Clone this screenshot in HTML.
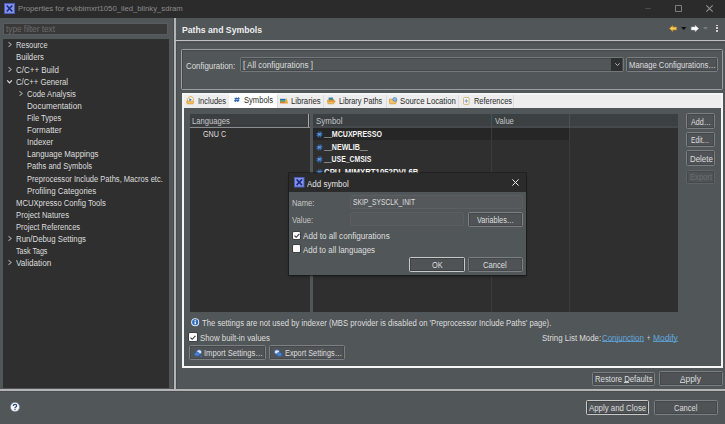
<!DOCTYPE html>
<html><head><meta charset="utf-8">
<style>
*{margin:0;padding:0;box-sizing:border-box}
html,body{width:725px;height:424px;overflow:hidden;background:#515658;font-family:"Liberation Sans",sans-serif;color:#dedede;position:relative}
.a{position:absolute}
.t{position:absolute;white-space:pre;line-height:10px;transform-origin:0 50%}
svg{position:absolute;overflow:visible}
</style></head><body>
<div class="a" style="left:0px;top:0px;width:725px;height:17.5px;background:#2b2b2b;"></div>
<svg style="left:4px;top:3.2px" width="11" height="11" viewBox="0 0 11 11"><rect x="0.5" y="0.5" width="10" height="10" fill="#8494e2" stroke="#4a5cc0" stroke-width="1"/><path d="M2.7 2.5L8.3 8.5M8.3 2.5L2.7 8.5" stroke="#1a2a88" stroke-width="1.6"/></svg>
<div class="t" style="left:17.80px;top:4.09px;font-size:8.0px;transform:scaleX(0.9652);color:#8c8c8c;">Properties for evkbimxrt1050_iled_blinky_sdram</div>
<div class="a" style="left:645px;top:7.9px;width:6.4px;height:0.9px;background:#4a4a4a;"></div>
<div class="a" style="left:675.1px;top:5px;width:7.100000000000023px;height:7px;border:1px solid #7c7c7c;border-radius:0.8px;"></div>
<svg style="left:706.4px;top:5.1px" width="7" height="7" viewBox="0 0 7 7"><path d="M0.3 0.3L6.7 6.7M6.7 0.3L0.3 6.7" stroke="#909090" stroke-width="1.1"/></svg>
<div class="a" style="left:3.2px;top:22.6px;width:164.8px;height:12.5px;background:#393939;border:1px solid #585c5e;"></div>
<div class="t" style="left:5.90px;top:23.80px;font-size:8.5px;transform:scaleX(0.9691);color:#6c6c6c;">type filter text</div>
<div class="a" style="left:3px;top:38.6px;width:166px;height:349.8px;background:#2f2f2f;"></div>
<svg style="left:8.3px;top:42.4px" width="4" height="5" viewBox="0 0 4 5"><path d="M0.5 0.2L3.2 2.5L0.5 4.8" fill="none" stroke="#9c9c9c" stroke-width="1.05"/></svg>
<div class="t" style="left:16.40px;top:40.30px;font-size:8.5px;transform:scaleX(0.8656);color:#dedede;">Resource</div>
<div class="t" style="left:16.40px;top:52.41px;font-size:8.5px;transform:scaleX(0.9082);color:#dedede;">Builders</div>
<svg style="left:8.3px;top:66.62px" width="4" height="5" viewBox="0 0 4 5"><path d="M0.5 0.2L3.2 2.5L0.5 4.8" fill="none" stroke="#9c9c9c" stroke-width="1.05"/></svg>
<div class="t" style="left:16.40px;top:64.52px;font-size:8.5px;transform:scaleX(0.9380);color:#dedede;">C/C++ Build</div>
<svg style="left:7.3px;top:79.63px" width="5" height="3.5" viewBox="0 0 5 3.5"><path d="M0.2 0.4L2.5 2.9L4.8 0.4" fill="none" stroke="#dcdcdc" stroke-width="1.2"/></svg>
<div class="t" style="left:16.40px;top:76.63px;font-size:8.5px;transform:scaleX(0.9095);color:#dedede;">C/C++ General</div>
<svg style="left:18.9px;top:90.84px" width="4" height="5" viewBox="0 0 4 5"><path d="M0.5 0.2L3.2 2.5L0.5 4.8" fill="none" stroke="#9c9c9c" stroke-width="1.05"/></svg>
<div class="t" style="left:26.60px;top:88.74px;font-size:8.5px;transform:scaleX(0.9058);color:#dedede;">Code Analysis</div>
<div class="t" style="left:26.60px;top:100.85px;font-size:8.5px;transform:scaleX(0.9568);color:#dedede;">Documentation</div>
<div class="t" style="left:26.60px;top:112.96px;font-size:8.5px;transform:scaleX(0.8862);color:#dedede;">File Types</div>
<div class="t" style="left:26.60px;top:125.07px;font-size:8.5px;transform:scaleX(0.9418);color:#dedede;">Formatter</div>
<div class="t" style="left:26.60px;top:137.18px;font-size:8.5px;transform:scaleX(0.9239);color:#dedede;">Indexer</div>
<div class="t" style="left:26.60px;top:149.29px;font-size:8.5px;transform:scaleX(0.9280);color:#dedede;">Language Mappings</div>
<div class="t" style="left:26.60px;top:161.40px;font-size:8.5px;transform:scaleX(0.8889);color:#dedede;">Paths and Symbols</div>
<div class="t" style="left:26.60px;top:173.51px;font-size:8.5px;transform:scaleX(0.8871);color:#dedede;">Preprocessor Include Paths, Macros etc.</div>
<div class="t" style="left:26.60px;top:185.62px;font-size:8.5px;transform:scaleX(0.9328);color:#dedede;">Profiling Categories</div>
<div class="t" style="left:16.40px;top:197.73px;font-size:8.5px;transform:scaleX(0.9032);color:#dedede;">MCUXpresso Config Tools</div>
<div class="t" style="left:16.40px;top:209.84px;font-size:8.5px;transform:scaleX(0.9045);color:#dedede;">Project Natures</div>
<div class="t" style="left:16.40px;top:221.95px;font-size:8.5px;transform:scaleX(0.8866);color:#dedede;">Project References</div>
<svg style="left:8.3px;top:236.16px" width="4" height="5" viewBox="0 0 4 5"><path d="M0.5 0.2L3.2 2.5L0.5 4.8" fill="none" stroke="#9c9c9c" stroke-width="1.05"/></svg>
<div class="t" style="left:16.40px;top:234.06px;font-size:8.5px;transform:scaleX(0.9188);color:#dedede;">Run/Debug Settings</div>
<div class="t" style="left:16.40px;top:246.17px;font-size:8.5px;transform:scaleX(0.8342);color:#dedede;">Task Tags</div>
<svg style="left:8.3px;top:260.38px" width="4" height="5" viewBox="0 0 4 5"><path d="M0.5 0.2L3.2 2.5L0.5 4.8" fill="none" stroke="#9c9c9c" stroke-width="1.05"/></svg>
<div class="t" style="left:16.40px;top:258.28px;font-size:8.5px;transform:scaleX(0.9590);color:#dedede;">Validation</div>
<div class="a" style="left:173px;top:18px;width:1px;height:371.5px;background:#474b4d;"></div>
<div class="a" style="left:176px;top:41px;width:1px;height:348.5px;background:#474b4d;"></div>
<div class="a" style="left:174px;top:18px;width:1.5px;height:371.5px;background:#b4b4b4;"></div>
<div class="a" style="left:0px;top:389.1px;width:725px;height:1.5px;background:#b4b4b4;"></div>
<div class="a" style="left:0px;top:390.6px;width:725px;height:1px;background:#484c4e;"></div>
<div class="t" style="left:181.50px;top:24.81px;font-size:9.4px;transform:scaleX(0.9250);color:#eeeeee;font-weight:bold;">Paths and Symbols</div>
<div class="a" style="left:175px;top:40.3px;width:550px;height:1.2px;background:#c0c0c0;"></div>
<div class="a" style="left:176px;top:41.5px;width:549px;height:1px;background:#474b4d;"></div>
<svg style="left:669px;top:24.5px" width="8" height="7" viewBox="0 0 8 7"><path d="M0.4 3.5L3.8 0.4V2.1H7.6V4.9H3.8V6.6Z" fill="#f4c85a" stroke="#b8801e" stroke-width="0.6"/></svg>
<svg style="left:681px;top:27px" width="5.5" height="3" viewBox="0 0 5.5 3"><path d="M0 0H5.5L2.75 3Z" fill="#101010"/></svg>
<svg style="left:691px;top:24.5px" width="8" height="7" viewBox="0 0 8 7"><path d="M7.6 3.5L4.2 0.4V2.1H0.4V4.9H4.2V6.6Z" fill="#ffffff" stroke="#d0d0d0" stroke-width="0.6"/></svg>
<svg style="left:703.3px;top:27px" width="5" height="2.8" viewBox="0 0 5 2.8"><path d="M0 0H5L2.5 2.8Z" fill="#7a7e80"/></svg>
<div class="a" style="left:715.6px;top:24.6px;width:2px;height:1.8px;background:#e8e8e8;border-radius:0.8px;"></div>
<div class="a" style="left:715.6px;top:27.3px;width:2px;height:1.8px;background:#e8e8e8;border-radius:0.8px;"></div>
<div class="a" style="left:715.6px;top:30.0px;width:2px;height:1.8px;background:#e8e8e8;border-radius:0.8px;"></div>
<div class="a" style="left:181px;top:49px;width:542px;height:41px;border:1px solid #9a9ea0;border-radius:1.5px;box-shadow:inset 1px 1px 0 #45494b;"></div>
<div class="t" style="left:186.00px;top:60.50px;font-size:8.5px;transform:scaleX(0.9297);color:#dedede;">Configuration:</div>
<div class="a" style="left:240px;top:56.7px;width:383.79999999999995px;height:15.0px;border:1px solid #74787a;border-radius:1.5px;box-shadow:inset 0 0 0 1px #45494b;"></div>
<div class="t" style="left:243.00px;top:60.00px;font-size:8.5px;transform:scaleX(0.9496);color:#dedede;">[ All configurations ]</div>
<div class="a" style="left:611.3px;top:58px;width:11px;height:12.6px;background:#2e2f30;"></div>
<svg style="left:614.6px;top:63px" width="5" height="3" viewBox="0 0 5 3"><path d="M0.3 0.3L2.5 2.5L4.7 0.3" fill="none" stroke="#d8d8d8" stroke-width="0.8"/></svg>
<div class="a" style="left:626.2px;top:57.1px;width:92.19999999999993px;height:15.199999999999996px;border:1px solid #7b7f81;border-radius:1.5px;box-shadow:inset 1px 1px 0 #45494b,inset -1px -1px 0 #45494b;background:#4f5356;"></div>
<div class="t" style="left:629.00px;top:60.20px;font-size:8.5px;transform:scaleX(0.9026);color:#dedede;">Manage Configurations…</div>
<div class="a" style="left:181.5px;top:92.8px;width:541px;height:275px;background:#f5f5f5;"></div>
<div class="a" style="left:183.5px;top:107.5px;width:537.2px;height:258px;background:#515658;"></div>
<div class="a" style="left:183.5px;top:94.5px;width:537.2px;height:13px;background:#ededed;"></div>
<div class="t" style="left:197.50px;top:95.90px;font-size:8.5px;transform:scaleX(0.8872);color:#2a2a2a;">Includes</div>
<div class="a" style="left:228.5px;top:93px;width:48.5px;height:14.7px;background:#ffffff;"></div>
<div class="t" style="left:243.90px;top:95.00px;font-size:8.5px;transform:scaleX(0.8928);color:#2a2a2a;">Symbols</div>
<div class="a" style="left:277px;top:94.5px;width:0.8px;height:13px;background:#dcdcdc;"></div>
<div class="t" style="left:291.10px;top:95.90px;font-size:8.5px;transform:scaleX(0.9077);color:#2a2a2a;">Libraries</div>
<div class="a" style="left:323px;top:94.5px;width:0.8px;height:13px;background:#dcdcdc;"></div>
<div class="t" style="left:338.70px;top:95.90px;font-size:8.5px;transform:scaleX(0.8644);color:#2a2a2a;">Library Paths</div>
<div class="a" style="left:385.8px;top:94.5px;width:0.8px;height:13px;background:#dcdcdc;"></div>
<div class="t" style="left:400.10px;top:95.90px;font-size:8.5px;transform:scaleX(0.9082);color:#2a2a2a;">Source Location</div>
<div class="a" style="left:458.2px;top:94.5px;width:0.8px;height:13px;background:#dcdcdc;"></div>
<div class="t" style="left:473.90px;top:95.90px;font-size:8.5px;transform:scaleX(0.8742);color:#2a2a2a;">References</div>
<div class="a" style="left:513.2px;top:94.5px;width:0.8px;height:13px;background:#dcdcdc;"></div>
<svg style="left:186.1px;top:95.9px" width="8.2" height="8.4" viewBox="0 0 8.2 8.4"><path d="M1.6 5.6Q1 3.2 2.6 1.6Q3.6 0.6 5 0.7Q6.8 0.9 7.3 2.6Q7.6 3.8 7 4.8" fill="#fbfbfb" stroke="#e0a838" stroke-width="1"/><path d="M3.4 2.2L5.9 3.7L3.4 5.2Z" fill="#3a6aa8"/><path d="M0.6 5.2H7.8L7 7.9H1.2Z" fill="#f2c260" stroke="#d09028" stroke-width="0.6"/></svg>
<svg style="left:233.6px;top:97.4px" width="5.8" height="5.3" viewBox="0 0 5.8 5.3"><path d="M2.3 0.3L1.3 5M4.6 0.3L3.6 5M0.6 1.7H5.6M0.2 3.6H5.2" stroke="#3068b0" stroke-width="1.2"/></svg>
<svg style="left:279.9px;top:97px" width="8.2" height="7" viewBox="0 0 8.2 7"><rect x="0" y="1.8" width="5.6" height="1.4" fill="#2b6cc0"/><rect x="0" y="3.2" width="5.6" height="1.6" fill="#3a9a50"/><rect x="0" y="4.8" width="5.6" height="1.6" fill="#e07a30"/><path d="M5.2 6.6L6.6 0.4L8.1 6.6Z" fill="#f0a820"/></svg>
<svg style="left:327.1px;top:97.3px" width="8.4" height="7" viewBox="0 0 8.4 7"><rect x="1.6" y="0.6" width="4.4" height="1.3" fill="#2b6cc0"/><rect x="1.6" y="1.9" width="5" height="1.6" fill="#3a9a50"/><path d="M0.4 3.2H6.4L8.2 4L6.6 6.8H1Z" fill="#f2c060" stroke="#c88a20" stroke-width="0.6"/><path d="M1.4 4.2H7.4" stroke="#e06a30" stroke-width="0.8"/></svg>
<svg style="left:388.9px;top:96.9px" width="8.2" height="7.2" viewBox="0 0 8.2 7.2"><path d="M0.4 2.2H3.6L7.8 3.6L6.6 6.8H0.8Z" fill="#f2c466" stroke="#c88a20" stroke-width="0.6"/><circle cx="5.8" cy="2.4" r="2" fill="#8ab4ec" stroke="#3a6ab0" stroke-width="0.5"/></svg>
<svg style="left:463.4px;top:96.7px" width="6.6" height="7.9" viewBox="0 0 6.6 7.9"><rect x="0.5" y="0.5" width="5.6" height="6.9" rx="1" fill="#f6f6f6" stroke="#c8a860" stroke-width="0.8"/><path d="M3.3 2.2V5.8M1.6 4H5" stroke="#8898b8" stroke-width="1"/></svg>
<div class="a" style="left:189.5px;top:113.7px;width:120.1px;height:198.2px;background:#2f2f2f;"></div>
<div class="a" style="left:189.5px;top:113.7px;width:120.1px;height:13.2px;background:#3b3f42;"></div>
<div class="a" style="left:189.5px;top:125.2px;width:120.1px;height:1.2px;background:#35393b;"></div>
<div class="a" style="left:189.5px;top:126.8px;width:120.1px;height:1.1px;background:#8a8d8f;"></div>
<div class="a" style="left:307.8px;top:113.7px;width:1.2px;height:13.2px;background:#a8a8a8;"></div>
<div class="t" style="left:192.00px;top:115.90px;font-size:8.5px;transform:scaleX(0.8960);color:#c4c6c8;">Languages</div>
<div class="t" style="left:202.80px;top:129.10px;font-size:8.5px;transform:scaleX(0.8470);color:#dedede;">GNU C</div>
<div class="a" style="left:313px;top:113.7px;width:364.5px;height:198.2px;background:#2f2f2f;"></div>
<div class="a" style="left:313px;top:113.7px;width:364.5px;height:14.3px;background:#3b4043;"></div>
<div class="a" style="left:313px;top:126.3px;width:364.5px;height:1.7px;background:#45494c;"></div>
<div class="a" style="left:491px;top:128px;width:1px;height:183.9px;background:#383c3f;"></div>
<div class="a" style="left:569px;top:128px;width:1px;height:183.9px;background:#383c3f;"></div>
<div class="a" style="left:491px;top:113.7px;width:1px;height:14.3px;background:#4c5154;"></div>
<div class="a" style="left:569px;top:113.7px;width:1px;height:14.3px;background:#4c5154;"></div>
<div class="a" style="left:313px;top:128px;width:178px;height:12.3px;background:#262626;"></div>
<div class="a" style="left:492px;top:128px;width:76.5px;height:12.3px;background:#262626;"></div>
<div class="t" style="left:315.70px;top:115.90px;font-size:8.5px;transform:scaleX(0.9350);color:#c4c6c8;">Symbol</div>
<div class="t" style="left:495.00px;top:115.90px;font-size:8.5px;transform:scaleX(0.8906);color:#c4c6c8;">Value</div>
<svg style="left:315.9px;top:131.0px" width="6.6" height="6.8" viewBox="0 0 6.6 6.8"><path d="M2.9 0.9L2.2 5.9M4.9 0.9L4.2 5.9M1 2.6H6M0.8 4.3H5.8" stroke="#3a72bc" stroke-width="1.15" stroke-linecap="round"/><path d="M2.2 2.6L4.8 2.6L4.5 4.3L2 4.3Z" fill="#6a9ad4"/></svg>
<div class="t" style="left:324.30px;top:129.10px;font-size:8.8px;transform:scaleX(0.8016);color:#f4f4f4;font-weight:bold;">__MCUXPRESSO</div>
<svg style="left:315.9px;top:143.6px" width="6.6" height="6.8" viewBox="0 0 6.6 6.8"><path d="M2.9 0.9L2.2 5.9M4.9 0.9L4.2 5.9M1 2.6H6M0.8 4.3H5.8" stroke="#3a72bc" stroke-width="1.15" stroke-linecap="round"/><path d="M2.2 2.6L4.8 2.6L4.5 4.3L2 4.3Z" fill="#6a9ad4"/></svg>
<div class="t" style="left:324.30px;top:141.70px;font-size:8.8px;transform:scaleX(0.8035);color:#f4f4f4;font-weight:bold;">__NEWLIB__</div>
<svg style="left:315.9px;top:156.2px" width="6.6" height="6.8" viewBox="0 0 6.6 6.8"><path d="M2.9 0.9L2.2 5.9M4.9 0.9L4.2 5.9M1 2.6H6M0.8 4.3H5.8" stroke="#3a72bc" stroke-width="1.15" stroke-linecap="round"/><path d="M2.2 2.6L4.8 2.6L4.5 4.3L2 4.3Z" fill="#6a9ad4"/></svg>
<div class="t" style="left:324.30px;top:154.30px;font-size:8.8px;transform:scaleX(0.7786);color:#f4f4f4;font-weight:bold;">__USE_CMSIS</div>
<svg style="left:315.9px;top:168.8px" width="6.6" height="6.8" viewBox="0 0 6.6 6.8"><path d="M2.9 0.9L2.2 5.9M4.9 0.9L4.2 5.9M1 2.6H6M0.8 4.3H5.8" stroke="#3a72bc" stroke-width="1.15" stroke-linecap="round"/><path d="M2.2 2.6L4.8 2.6L4.5 4.3L2 4.3Z" fill="#6a9ad4"/></svg>
<div class="t" style="left:324.30px;top:166.90px;font-size:8.8px;transform:scaleX(0.8867);color:#f4f4f4;font-weight:bold;">CPU_MIMXRT1052DVL6B</div>
<div class="a" style="left:685.9px;top:113.1px;width:29.300000000000068px;height:15.800000000000011px;border:1px solid #7b7f81;border-radius:1.5px;box-shadow:inset 1px 1px 0 #45494b,inset -1px -1px 0 #45494b;background:#4f5356;"></div>
<div class="t" style="left:690.80px;top:116.70px;font-size:8.5px;transform:scaleX(0.8423);color:#dedede;">Add…</div>
<div class="a" style="left:685.9px;top:131.9px;width:29.300000000000068px;height:14.900000000000006px;border:1px solid #7b7f81;border-radius:1.5px;box-shadow:inset 1px 1px 0 #45494b,inset -1px -1px 0 #45494b;background:#4f5356;"></div>
<div class="t" style="left:691.40px;top:134.90px;font-size:8.5px;transform:scaleX(0.7903);color:#dedede;">Edit…</div>
<div class="a" style="left:685.9px;top:150.4px;width:29.300000000000068px;height:15.400000000000006px;border:1px solid #7b7f81;border-radius:1.5px;box-shadow:inset 1px 1px 0 #45494b,inset -1px -1px 0 #45494b;background:#4f5356;"></div>
<div class="t" style="left:689.50px;top:153.60px;font-size:8.5px;transform:scaleX(0.9277);color:#dedede;">Delete</div>
<div class="a" style="left:685.9px;top:169.5px;width:29.300000000000068px;height:14.699999999999989px;border:1px solid #5f6365;border-radius:1.5px;box-shadow:inset 1px 1px 0 #45494b,inset -1px -1px 0 #45494b;background:#4f5356;"></div>
<div class="t" style="left:690.00px;top:172.20px;font-size:8.5px;transform:scaleX(0.8951);color:#6a6e70;">Export</div>
<svg style="left:190.6px;top:318.4px" width="8.4" height="8.4" viewBox="0 0 8.4 8.4"><circle cx="4.2" cy="4.2" r="4" fill="#f0f4fa"/><circle cx="4.2" cy="4.2" r="3.1" fill="#2f6cc0"/><rect x="3.55" y="3.5" width="1.3" height="2.8" fill="#fff"/><rect x="3.55" y="1.8" width="1.3" height="1.1" fill="#fff"/></svg>
<div class="t" style="left:201.90px;top:318.00px;font-size:8.5px;transform:scaleX(0.9072);color:#dedede;">The settings are not used by indexer (MBS provider is disabled on 'Preprocessor Include Paths' page).</div>
<div class="a" style="left:189.3px;top:333.2px;width:7.8px;height:7.9px;background:#fafafa;box-shadow:0 0 0 0.6px #2e2e2e;border-radius:0.8px;"></div>
<svg style="left:190.4px;top:334.5px" width="5.5" height="5.5" viewBox="0 0 5.5 5.5"><path d="M0.5 2.6L2.2 4.3L5.4 0.9" fill="none" stroke="#383838" stroke-width="1.1"/></svg>
<div class="t" style="left:199.50px;top:332.70px;font-size:8.5px;transform:scaleX(0.9245);color:#dedede;">Show built-in values</div>
<div class="t" style="left:541.60px;top:332.70px;font-size:8.5px;transform:scaleX(0.9282);color:#dedede;">String List Mode:</div>
<div class="t" style="left:602.20px;top:332.70px;font-size:8.5px;transform:scaleX(0.9312);color:#62a8de;">Conjunction</div>
<div class="a" style="left:602.2px;top:340.7px;width:41.8px;height:0.9px;background:#5a98cc;"></div>
<div class="t" style="left:646.70px;top:332.70px;font-size:8.5px;transform:scaleX(0.6642);color:#dedede;">+</div>
<div class="t" style="left:653.40px;top:332.70px;font-size:8.5px;transform:scaleX(0.9901);color:#62a8de;">Modify</div>
<div class="a" style="left:653.4px;top:340.7px;width:24.8px;height:0.9px;background:#5a98cc;"></div>
<div class="a" style="left:189.2px;top:345.3px;width:76.69999999999999px;height:14.800000000000011px;border:1px solid #7b7f81;border-radius:1.5px;box-shadow:inset 1px 1px 0 #45494b,inset -1px -1px 0 #45494b;background:#4f5356;"></div>
<div class="t" style="left:204.20px;top:348.40px;font-size:8.5px;transform:scaleX(0.8969);color:#dedede;">Import Settings…</div>
<div class="a" style="left:269.4px;top:345.3px;width:75.5px;height:14.800000000000011px;border:1px solid #7b7f81;border-radius:1.5px;box-shadow:inset 1px 1px 0 #45494b,inset -1px -1px 0 #45494b;background:#4f5356;"></div>
<div class="t" style="left:284.60px;top:348.40px;font-size:8.5px;transform:scaleX(0.8618);color:#dedede;">Export Settings…</div>
<svg style="left:193.9px;top:348.6px" width="8.2" height="8.2" viewBox="0 0 8.2 8.2"><ellipse cx="5.2" cy="3" rx="2.6" ry="2.2" fill="#dce8f8" stroke="#3a6ab8" stroke-width="0.8"/><ellipse cx="3" cy="5.2" rx="2.6" ry="2" fill="#4a80d0" stroke="#2a5aa8" stroke-width="0.6"/><circle cx="7.2" cy="7.2" r="0.9" fill="#2a70d0"/></svg>
<svg style="left:273.6px;top:348.6px" width="8.6" height="8.2" viewBox="0 0 8.6 8.2"><ellipse cx="3" cy="3" rx="2.6" ry="2.2" fill="#dce8f8" stroke="#3a6ab8" stroke-width="0.8"/><ellipse cx="5.4" cy="5.4" rx="2.6" ry="2" fill="#4a80d0" stroke="#2a5aa8" stroke-width="0.6"/></svg>
<div class="a" style="left:592.3px;top:371.5px;width:63.200000000000045px;height:14.300000000000011px;border:1px solid #7b7f81;border-radius:1.5px;box-shadow:inset 1px 1px 0 #45494b,inset -1px -1px 0 #45494b;background:#4f5356;"></div>
<div class="t" style="left:595.00px;top:374.20px;font-size:8.5px;transform:scaleX(0.9098);color:#dedede;">Restore Defaults</div>
<div class="a" style="left:623.8px;top:382.3px;width:5px;height:0.8px;background:#c8c8c8;"></div>
<div class="a" style="left:659.3px;top:371.3px;width:63.90000000000009px;height:14.599999999999966px;border:1px solid #7b7f81;border-radius:1.5px;box-shadow:inset 1px 1px 0 #45494b,inset -1px -1px 0 #45494b;background:#4f5356;"></div>
<div class="t" style="left:680.00px;top:374.20px;font-size:8.5px;transform:scaleX(0.9828);color:#dedede;">Apply</div>
<div class="a" style="left:680.2px;top:382.3px;width:5px;height:0.8px;background:#c8c8c8;"></div>
<svg style="left:9.5px;top:401.8px" width="10" height="10" viewBox="0 0 10 10"><circle cx="5" cy="5" r="4.7" fill="#f6f6f6" stroke="#5a6a88" stroke-width="0.6"/><path d="M3.3 3.9Q3.3 2.3 5 2.3Q6.7 2.3 6.7 3.8Q6.7 4.7 5.5 5.2Q5 5.5 5 6.2" fill="none" stroke="#2a4a80" stroke-width="1.2"/><rect x="4.4" y="6.9" width="1.2" height="1.2" fill="#2a4a80"/></svg>
<div class="a" style="left:586px;top:400.1px;width:63.10000000000002px;height:14.899999999999977px;border:1.2px solid #c8c8c8;border-radius:1.5px;box-shadow:inset 0 0 0 1px #3e4244;background:#4f5356;"></div>
<div class="t" style="left:589.20px;top:403.40px;font-size:8.5px;transform:scaleX(0.9240);color:#dedede;">Apply and Close</div>
<div class="a" style="left:654.1px;top:399.9px;width:64.10000000000002px;height:15.0px;border:1px solid #7b7f81;border-radius:1.5px;box-shadow:inset 1px 1px 0 #45494b,inset -1px -1px 0 #45494b;background:#4f5356;"></div>
<div class="t" style="left:674.20px;top:403.40px;font-size:8.5px;transform:scaleX(0.8841);color:#dedede;">Cancel</div>
<div class="a" style="left:289px;top:172.8px;width:236.5px;height:102.3px;background:#515658;box-shadow:0 0 0 0.8px rgba(20,20,20,0.6),0 1.5px 3px rgba(0,0,0,0.35);"></div>
<div class="a" style="left:289px;top:172.8px;width:237px;height:19px;background:#2b2b2b;"></div>
<svg style="left:294.3px;top:177.4px" width="10.5" height="10.5" viewBox="0 0 11 11"><rect x="0.5" y="0.5" width="10" height="10" fill="#8494e2" stroke="#4a5cc0" stroke-width="1"/><path d="M2.7 2.5L8.3 8.5M8.3 2.5L2.7 8.5" stroke="#1a2a88" stroke-width="1.6"/></svg>
<div class="t" style="left:307.30px;top:179.00px;font-size:8.5px;transform:scaleX(0.9387);color:#e4e4e4;">Add symbol</div>
<svg style="left:511.5px;top:179.3px" width="7" height="7" viewBox="0 0 7 7"><path d="M0.4 0.4L6.6 6.6M6.6 0.4L0.4 6.6" stroke="#ececec" stroke-width="1"/></svg>
<div class="t" style="left:292.00px;top:198.00px;font-size:8.5px;transform:scaleX(0.8983);color:#c8c8c8;">Name:</div>
<div class="a" style="left:350.3px;top:195.3px;width:173.09999999999997px;height:13.899999999999977px;background:#54585b;border:1px solid #5b5f61;border-radius:1.5px;"></div>
<div class="t" style="left:352.50px;top:196.60px;font-size:8.5px;transform:scaleX(0.7906);color:#dedede;">SKIP_SYSCLK_INIT</div>
<div class="t" style="left:292.00px;top:215.20px;font-size:8.5px;transform:scaleX(0.9027);color:#c4c4c4;">Value:</div>
<div class="a" style="left:350.3px;top:212.2px;width:114.19999999999999px;height:14.200000000000017px;background:#54585b;border:1px solid #5b5f61;border-radius:1.5px;"></div>
<div class="a" style="left:468.1px;top:212px;width:55.10000000000002px;height:14.900000000000006px;border:1px solid #7b7f81;border-radius:1.5px;box-shadow:inset 1px 1px 0 #45494b,inset -1px -1px 0 #45494b;background:#4f5356;"></div>
<div class="t" style="left:476.70px;top:215.20px;font-size:8.5px;transform:scaleX(0.8566);color:#dedede;">Variables…</div>
<div class="a" style="left:292.7px;top:231.9px;width:7.5px;height:7.4px;background:#fafafa;box-shadow:0 0 0 0.6px #2e2e2e;border-radius:0.8px;"></div>
<svg style="left:293.5px;top:232.9px" width="5.5" height="5.5" viewBox="0 0 5.5 5.5"><path d="M0.5 2.6L2.2 4.3L5.4 0.9" fill="none" stroke="#383838" stroke-width="1.1"/></svg>
<div class="t" style="left:302.90px;top:230.90px;font-size:8.5px;transform:scaleX(0.9555);color:#dedede;">Add to all configurations</div>
<div class="a" style="left:292.7px;top:244.6px;width:7.5px;height:7.5px;background:#fafafa;box-shadow:0 0 0 0.6px #2e2e2e;border-radius:0.8px;"></div>
<div class="t" style="left:302.90px;top:244.60px;font-size:8.5px;transform:scaleX(0.9360);color:#dedede;">Add to all languages</div>
<div class="a" style="left:409px;top:256.9px;width:56px;height:15.300000000000011px;border:1.2px solid #c8c8c8;border-radius:1.5px;box-shadow:inset 0 0 0 1px #3e4244;background:#4f5356;"></div>
<div class="t" style="left:432.00px;top:259.90px;font-size:8.5px;transform:scaleX(0.8631);color:#dedede;">OK</div>
<div class="a" style="left:467.8px;top:256.9px;width:55.19999999999999px;height:15.100000000000023px;border:1px solid #7b7f81;border-radius:1.5px;box-shadow:inset 1px 1px 0 #45494b,inset -1px -1px 0 #45494b;background:#4f5356;"></div>
<div class="t" style="left:483.30px;top:259.90px;font-size:8.5px;transform:scaleX(0.8992);color:#dedede;">Cancel</div>
</body></html>
